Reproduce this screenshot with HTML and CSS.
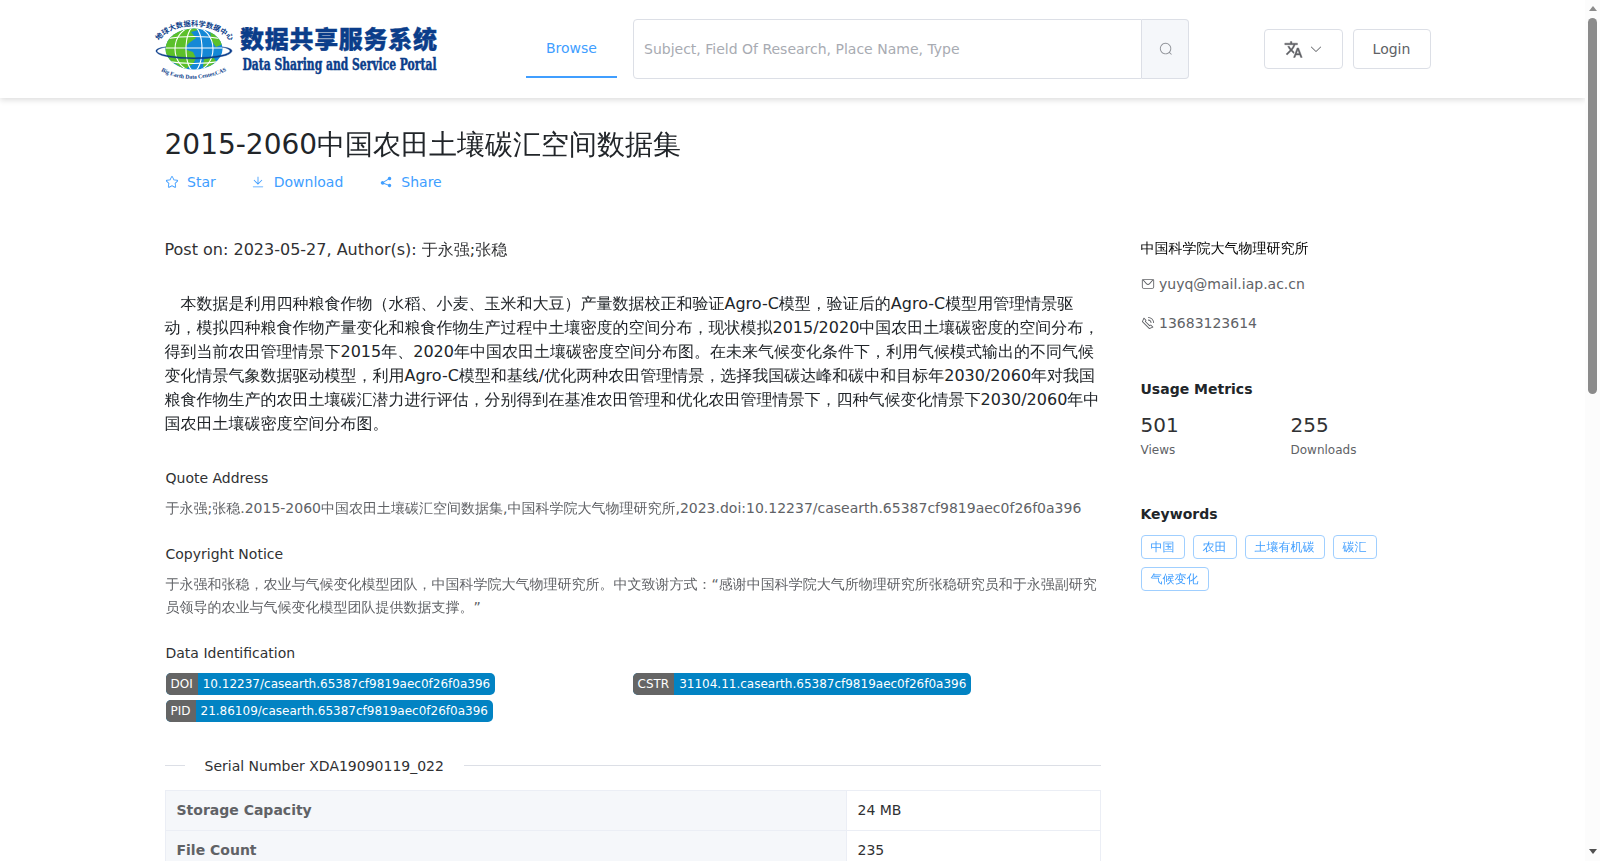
FILE: index.html
```html
<!DOCTYPE html>
<html lang="zh">
<head>
  <meta charset="UTF-8" />
  <meta name="viewport" content="width=device-width, initial-scale=1" />
  <title>2015-2060中国农田土壤碳汇空间数据集</title>
  <link rel="stylesheet" href="styles.css">
</head>
<body>

  <div class="page">
    <header class="header">
      <a class="logo" href="#">
        <svg width="374" height="70" viewBox="0 0 374 70">
          <defs>
            <clipPath id="globe"><ellipse cx="42" cy="35" rx="28.500" ry="20.500" /></clipPath>
            <path id="arc-top" d="M7 27 C20 7 64 7 79 28" />
            <path id="arc-bottom" d="M9 57 Q38 73 77 56" />
          </defs>
          <g clip-path="url(#globe)">
            <rect x="10" y="10" width="64" height="48" fill="#1488d6" />
            <path d="M10 10h38l-2 6-7 2 5 6-7 5-5 6 9 3 3 6-3 6-9 6-8-6-14-8z" fill="#5cc02a" />
            <path d="M58 15l9 6 4 9-7 3-5-7zM52 45l9-2 3 4-5 5-8 1z" fill="#5cc02a" />
            <g fill="none" stroke="#fff" stroke-width="1.100">
              <ellipse cx="42" cy="35" rx="8" ry="22" />
              <ellipse cx="42" cy="35" rx="19" ry="22" />
              <path d="M12 25q30-5 60 0M12 34h60M12 47q30 5 60 0" />
            </g>
          </g>
          <path d="M14 33C4 35 3 37.500 8 39.500 22 45 62 45 75 39.500 80 37.500 79 35 70 33 82 34 83 38 74 41.500 58 46 26 46 10 41.500 1 38 2 34 14 33z" fill="#0b3d8a" stroke="#0b3d8a" stroke-width="0.400" />
          <text class="logo-ring"><textPath href="#arc-top" textLength="80">地球大数据科学数据中心</textPath></text>
          <text class="logo-ring-en"><textPath href="#arc-bottom" textLength="68">Big Earth Data Center,CAS</textPath></text>
          <text class="logo-cn" x="88" y="33.500" textLength="197">数据共享服务系统</text>
          <text class="logo-en" x="90.500" y="56" textLength="194" lengthAdjust="spacingAndGlyphs">Data Sharing and Service Portal</text>
        </svg>
      </a>

      <nav class="nav">
        <a class="nav-item active" href="#">Browse</a>
      </nav>

      <form class="search">
        <input type="text" placeholder="Subject, Field Of Research, Place Name, Type" />
        <button type="button" aria-label="Search">
          <svg class="icon" viewBox="0 0 1024 1024"><path d="m795.904 750.72 124.992 124.928a32 32 0 0 1-45.248 45.248L750.656 795.904a416 416 0 1 1 45.248-45.248zM480 832a352 352 0 1 0 0-704 352 352 0 0 0 0 704z"/></svg>
        </button>
      </form>

      <div class="user">
        <button class="btn btn-lang" type="button" aria-label="Language">
          <svg class="translate" viewBox="0 0 24 24"><path d="M12.870 15.070l-2.540-2.510.030-.030c1.740-1.940 2.980-4.170 3.710-6.530H17V4h-7V2H8v2H1v1.990h11.170C11.500 7.920 10.440 9.750 9 11.350 8.070 10.320 7.300 9.190 6.690 8h-2c.730 1.630 1.730 3.170 2.980 4.560l-5.090 5.020L4 19l5-5 3.110 3.110.760-2.040zM18.500 10h-2L12 22h2l1.120-3h4.750L21 22h2l-4.500-12zm-2.620 7l1.620-4.330L19.120 17h-3.240z"/></svg>
          <svg class="icon" viewBox="0 0 1024 1024"><path d="M831.872 340.864 512 652.672 192.128 340.864a30.592 30.592 0 0 0-42.752 0 29.120 29.120 0 0 0 0 41.600L489.664 714.240a32 32 0 0 0 44.672 0l340.288-331.712a29.120 29.120 0 0 0 0-41.728 30.592 30.592 0 0 0-42.752 0z"/></svg>
        </button>
        <button class="btn" type="button">Login</button>
      </div>
    </header>

    <div class="container">
      <main class="main">
        <h1>2015-2060中国农田土壤碳汇空间数据集</h1>
        <div class="actions">
          <a href="#">
            <svg class="icon" viewBox="0 0 1024 1024"><path d="M512 747.840l228.160 119.936a6.400 6.400 0 0 0 9.280-6.720l-43.520-254.080 184.512-179.904a6.400 6.400 0 0 0-3.520-10.880l-255.104-37.120L517.760 147.904a6.400 6.400 0 0 0-11.520 0L392.192 379.072l-255.104 37.120a6.400 6.400 0 0 0-3.520 10.880L318.080 606.976l-43.584 254.080a6.400 6.400 0 0 0 9.280 6.720L512 747.840zM313.600 924.480a70.400 70.400 0 0 1-102.144-74.240l37.888-220.928L88.960 472.960A70.400 70.400 0 0 1 128 352.896l221.760-32.256 99.200-200.960a70.400 70.400 0 0 1 126.208 0l99.200 200.960 221.824 32.256a70.400 70.400 0 0 1 39.040 120.064L774.720 629.376l37.888 220.928a70.400 70.400 0 0 1-102.144 74.240L512 820.096l-198.400 104.320z"/></svg>
            Star
          </a>
          <a href="#">
            <svg class="icon" viewBox="0 0 1024 1024"><path d="M160 832h704a32 32 0 1 1 0 64H160a32 32 0 1 1 0-64zm384-253.696 236.288-236.352 45.248 45.248L508.800 704 192 387.200l45.248-45.248L480 584.704V128h64v450.304z"/></svg>
            Download
          </a>
          <a href="#">
            <svg class="icon" viewBox="0 0 1024 1024"><path d="m679.872 348.800-301.760 188.608a127.808 127.808 0 0 1 5.120 52.160l279.936 104.960a128 128 0 1 1-22.464 59.904l-279.872-104.960a128 128 0 1 1-16.640-166.272l301.696-188.608a128 128 0 1 1 33.920 54.272z"/></svg>
            Share
          </a>
        </div>

        <p class="post">Post on: 2023-05-27, Author(s): 于永强;张稳</p>
        <p class="desc">&#12288;本数据是利用四种粮食作物（水稻、小麦、玉米和大豆）产量数据校正和验证Agro-C模型，验证后的Agro-C模型用管理情景驱动，模拟四种粮食作物产量变化和粮食作物生产过程中土壤密度的空间分布，现状模拟2015/2020中国农田土壤碳密度的空间分布，得到当前农田管理情景下2015年、2020年中国农田土壤碳密度空间分布图。在未来气候变化条件下，利用气候模式输出的不同气候变化情景气象数据驱动模型，利用Agro-C模型和基线/优化两种农田管理情景，选择我国碳达峰和碳中和目标年2030/2060年对我国粮食作物生产的农田土壤碳汇潜力进行评估，分别得到在基准农田管理和优化农田管理情景下，四种气候变化情景下2030/2060年中国农田土壤碳密度空间分布图。</p>

        <section class="info">
          <h2>Quote Address</h2>
          <p>于永强;张稳.2015-2060中国农田土壤碳汇空间数据集,中国科学院大气物理研究所,2023.doi:10.12237/casearth.65387cf9819aec0f26f0a396</p>
          <h2>Copyright Notice</h2>
          <p>于永强和张稳，农业与气候变化模型团队，中国科学院大气物理研究所。中文致谢方式：“感谢中国科学院大气所物理研究所张稳研究员和于永强副研究员领导的农业与气候变化模型团队提供数据支撑。”</p>
          <h2>Data Identification</h2>
          <div class="badges">
            <div class="badge"><span>DOI</span><span>10.12237/casearth.65387cf9819aec0f26f0a396</span></div>
            <div class="badge"><span>CSTR</span><span>31104.11.casearth.65387cf9819aec0f26f0a396</span></div>
            <div class="badge"><span>PID</span><span>21.86109/casearth.65387cf9819aec0f26f0a396</span></div>
          </div>
        </section>

        <div class="divider"><span>Serial Number XDA19090119_022</span></div>

        <table class="table">
          <tr>
            <th>Storage Capacity</th>
            <td>24 MB</td>
          </tr>
          <tr>
            <th>File Count</th>
            <td>235</td>
          </tr>
        </table>
      </main>

      <aside class="side">
        <div class="org">中国科学院大气物理研究所</div>
        <div class="contact">
          <svg class="icon" viewBox="0 0 1024 1024"><path d="M128 224v512a64 64 0 0 0 64 64h640a64 64 0 0 0 64-64V224H128zm0-64h768a64 64 0 0 1 64 64v512a128 128 0 0 1-128 128H192A128 128 0 0 1 64 736V224a64 64 0 0 1 64-64z"/><path d="M904 224 656.512 506.880a192 192 0 0 1-289.024 0L120 224h784zm-698.944 0 210.560 240.704a128 128 0 0 0 192.704 0L818.944 224H205.056z"/></svg>
          yuyq@mail.iap.ac.cn
        </div>
        <div class="contact">
          <svg class="icon" viewBox="0 0 1024 1024"><path d="M79.360 432.256 591.744 944.640a32 32 0 0 0 35.200 6.784l253.440-108.544a32 32 0 0 0 9.984-52.032l-153.856-153.920a32 32 0 0 0-36.928-6.016l-69.888 34.944L358.080 394.240l35.008-69.888a32 32 0 0 0-5.952-36.928L233.152 133.568a32 32 0 0 0-52.032 10.048L72.512 397.056a32 32 0 0 0 6.784 35.200zm60.480-29.952 81.536-190.080L325.568 316.480l-24.640 49.216-20.608 41.216 32.576 32.640 271.552 271.552 32.640 32.640 41.216-20.672 49.280-24.576 104.192 104.128-190.080 81.472L139.840 402.304zM512 320v-64a256 256 0 0 1 256 256h-64a192 192 0 0 0-192-192zm0-192V64a448 448 0 0 1 448 448h-64a384 384 0 0 0-384-384z"/></svg>
          13683123614
        </div>

        <h3 class="usage">Usage Metrics</h3>
        <div class="metrics">
          <div><strong>501</strong><span>Views</span></div>
          <div><strong>255</strong><span>Downloads</span></div>
        </div>

        <h3 class="keywords">Keywords</h3>
        <div class="tags">
          <span class="tag">中国</span>
          <span class="tag">农田</span>
          <span class="tag">土壤有机碳</span>
          <span class="tag">碳汇</span>
          <span class="tag">气候变化</span>
        </div>
      </aside>
    </div>
  </div>

  <div class="scrollbar">
    <i class="arrow up"></i>
    <i class="thumb"></i>
    <i class="arrow down"></i>
  </div>

</body>
</html>
```
FILE: styles.css
```css
:root {
  --primary: #409eff;
  --text: #303133;
  --text-regular: #606266;
  --border: #dcdfe6;
}

* {
  box-sizing: border-box;
}

body {
  margin: 0;
  height: 100vh;
  display: flex;
  overflow: hidden;
  font-family: "DejaVu Sans", "WenQuanYi Zen Hei", "WenQuanYi Micro Hei", "Noto Sans CJK SC", sans-serif;
  font-size: 14px;
  color: var(--text);
  background: #fff;
  text-spacing-trim: space-all;
}

h1, h2, h3, p {
  margin: 0;
  font-weight: 400;
}

a {
  color: var(--primary);
  text-decoration: none;
}

button, input {
  font: inherit;
}

.icon {
  width: 14px;
  height: 14px;
  fill: currentColor;
  flex: none;
}

.page {
  flex: 1;
  min-width: 0;
  height: 100vh;
  overflow: hidden;
}

/* Header */
.header {
  height: 98px;
  padding-left: 152px;
  display: flex;
  align-items: center;
  box-shadow: 0 2px 6px rgba(0, 0, 0, 0.14);
}

.logo {
  width: 374px;
  height: 70px;
}

.logo svg {
  display: block;
  overflow: visible;
}

.logo text {
  fill: #0b3d8a;
}

.logo-ring {
  font: 700 7.200px "Noto Sans CJK SC", sans-serif;
}

.logo-ring-en {
  font: 700 5.800px "Liberation Serif", serif;
}

.logo-cn {
  font: 900 24px "Noto Sans CJK SC", sans-serif;
  stroke: #0b3d8a;
  stroke-width: 0.400px;
}

.logo-en {
  font: 700 16px "DejaVu Serif", serif;
  stroke: #0b3d8a;
  stroke-width: 0.500px;
}

.nav {
  height: 60px;
}

.nav-item {
  display: block;
  width: 91px;
  height: 59px;
  line-height: 58px;
  text-align: center;
  border-bottom: 2px solid transparent;
}

.nav-item.active {
  border-color: var(--primary);
}

.search {
  display: flex;
  width: 556px;
  height: 60px;
  margin-left: 16px;
}

.search input {
  flex: 1;
  min-width: 0;
  padding: 0 10px;
  border: 1px solid var(--border);
  border-radius: 4px 0 0 4px;
  outline: none;
}

.search input::placeholder {
  color: #a8abb2;
}

.search button {
  width: 47px;
  padding: 0 0 0 1px;
  border: 1px solid var(--border);
  border-left: none;
  border-radius: 0 4px 4px 0;
  background: #f5f7fa;
  color: #909399;
}

.search button .icon {
  vertical-align: middle;
  margin-top: -2px;
}

.user {
  display: flex;
  gap: 10px;
  margin-left: 75px;
}

.btn {
  height: 40px;
  width: 78px;
  padding: 0 1px 0 0;
  display: flex;
  align-items: center;
  justify-content: center;
  border: 1px solid var(--border);
  border-radius: 4px;
  background: #fff;
  color: var(--text-regular);
}

.btn-lang {
  width: 79px;
  padding: 0;
  gap: 6px;
}

.translate {
  width: 19px;
  height: 19px;
  fill: currentColor;
  stroke: currentColor;
  stroke-width: 0.500;
}

/* Content */
.container {
  display: flex;
  padding-left: 164.500px;
}

.main {
  width: 936px;
}

.main h1 {
  margin-top: 30px;
  font-size: 28px;
  line-height: 34px;
  color: #212529;
}

.actions {
  display: flex;
  gap: 35.500px;
  margin-top: 10px;
  line-height: 20px;
}

.actions a {
  display: flex;
  align-items: center;
  gap: 8.500px;
}

.post {
  margin-top: 46px;
  font-size: 16px;
  line-height: 24px;
}

.desc {
  margin-top: 30px;
  font-size: 16px;
  line-height: 24px;
  color: #212529;
}

.info {
  margin-top: 31px;
  padding-left: 1px;
}

.info h2 {
  font-size: 14px;
  line-height: 23px;
}

.info p {
  margin: 7px 0 23px;
  line-height: 23px;
  color: var(--text-regular);
}

.badges {
  display: grid;
  grid-template-columns: 467px 1fr;
  justify-items: start;
  row-gap: 5px;
  margin-top: 8px;
}

.badge {
  display: flex;
  height: 22px;
  line-height: 22px;
  font-size: 12px;
  color: #fff;
  border-radius: 5px;
  overflow: hidden;
  background: #0283c3;
}

.badge span {
  padding: 0 5px;
}

.badge span:first-child {
  background: #656565;
}

.divider {
  display: flex;
  align-items: flex-start;
  margin-top: 33px;
  line-height: 22px;
}

.divider::before, .divider::after {
  content: '';
  height: 1px;
  margin-top: 10px;
  background: var(--border);
}

.divider::before {
  width: 20px;
  margin-right: 20px;
}

.divider::after {
  flex: 1;
  margin-left: 20px;
}

.table {
  width: 100%;
  margin-top: 13px;
  border-collapse: collapse;
  table-layout: fixed;
}

.table th, .table td {
  height: 40px;
  padding: 0 11px 2px;
  border: 1px solid #ebeef5;
  text-align: left;
}

.table th {
  width: 681px;
  background: #f5f7fa;
  color: var(--text-regular);
}

/* Sidebar */
.side {
  margin-left: 40px;
  padding-top: 138px;
  width: 290px;
}

.org {
  line-height: 24px;
  color: #000;
}

.contact {
  display: flex;
  align-items: center;
  gap: 4.500px;
  height: 39px;
  margin-top: 4px;
  color: var(--text-regular);
}

.contact + .contact {
  margin-top: 0;
}

.side h3 {
  font-size: 14px;
  font-weight: 700;
  line-height: 20px;
  color: #212529;
}

.side .usage {
  margin-top: 37px;
}

.metrics {
  display: grid;
  grid-template-columns: 150px 1fr;
  margin-top: 12px;
}

.metrics strong, .metrics span {
  display: block;
}

.metrics strong {
  font-size: 20px;
  font-weight: 400;
  line-height: 28px;
}

.metrics span {
  margin-top: 3px;
  font-size: 12px;
  line-height: 16px;
  color: var(--text-regular);
}

.side .keywords {
  margin-top: 46px;
}

.tags {
  display: flex;
  flex-wrap: wrap;
  gap: 8px;
  margin-top: 11px;
}

.tag {
  height: 24px;
  padding: 0 9px;
  border: 1px solid #a0cfff;
  border-radius: 4px;
  font-size: 12px;
  line-height: 22px;
  color: var(--primary);
}

/* Scrollbar */
.scrollbar {
  width: 15px;
  height: 100vh;
  padding: 6px 0 7px;
  display: flex;
  flex-direction: column;
  align-items: center;
  background: #fcfcfc;
}

.thumb {
  width: 9px;
  height: 376px;
  margin: 7px 0 auto;
  border-radius: 5px;
  background: #8b8b8b;
}

.arrow {
  border: 4.500px solid transparent;
}

.arrow.up {
  border-top: none;
  border-bottom: 5px solid #8b8b8b;
}

.arrow.down {
  border-bottom: none;
  border-top: 5px solid #505050;
}
```
